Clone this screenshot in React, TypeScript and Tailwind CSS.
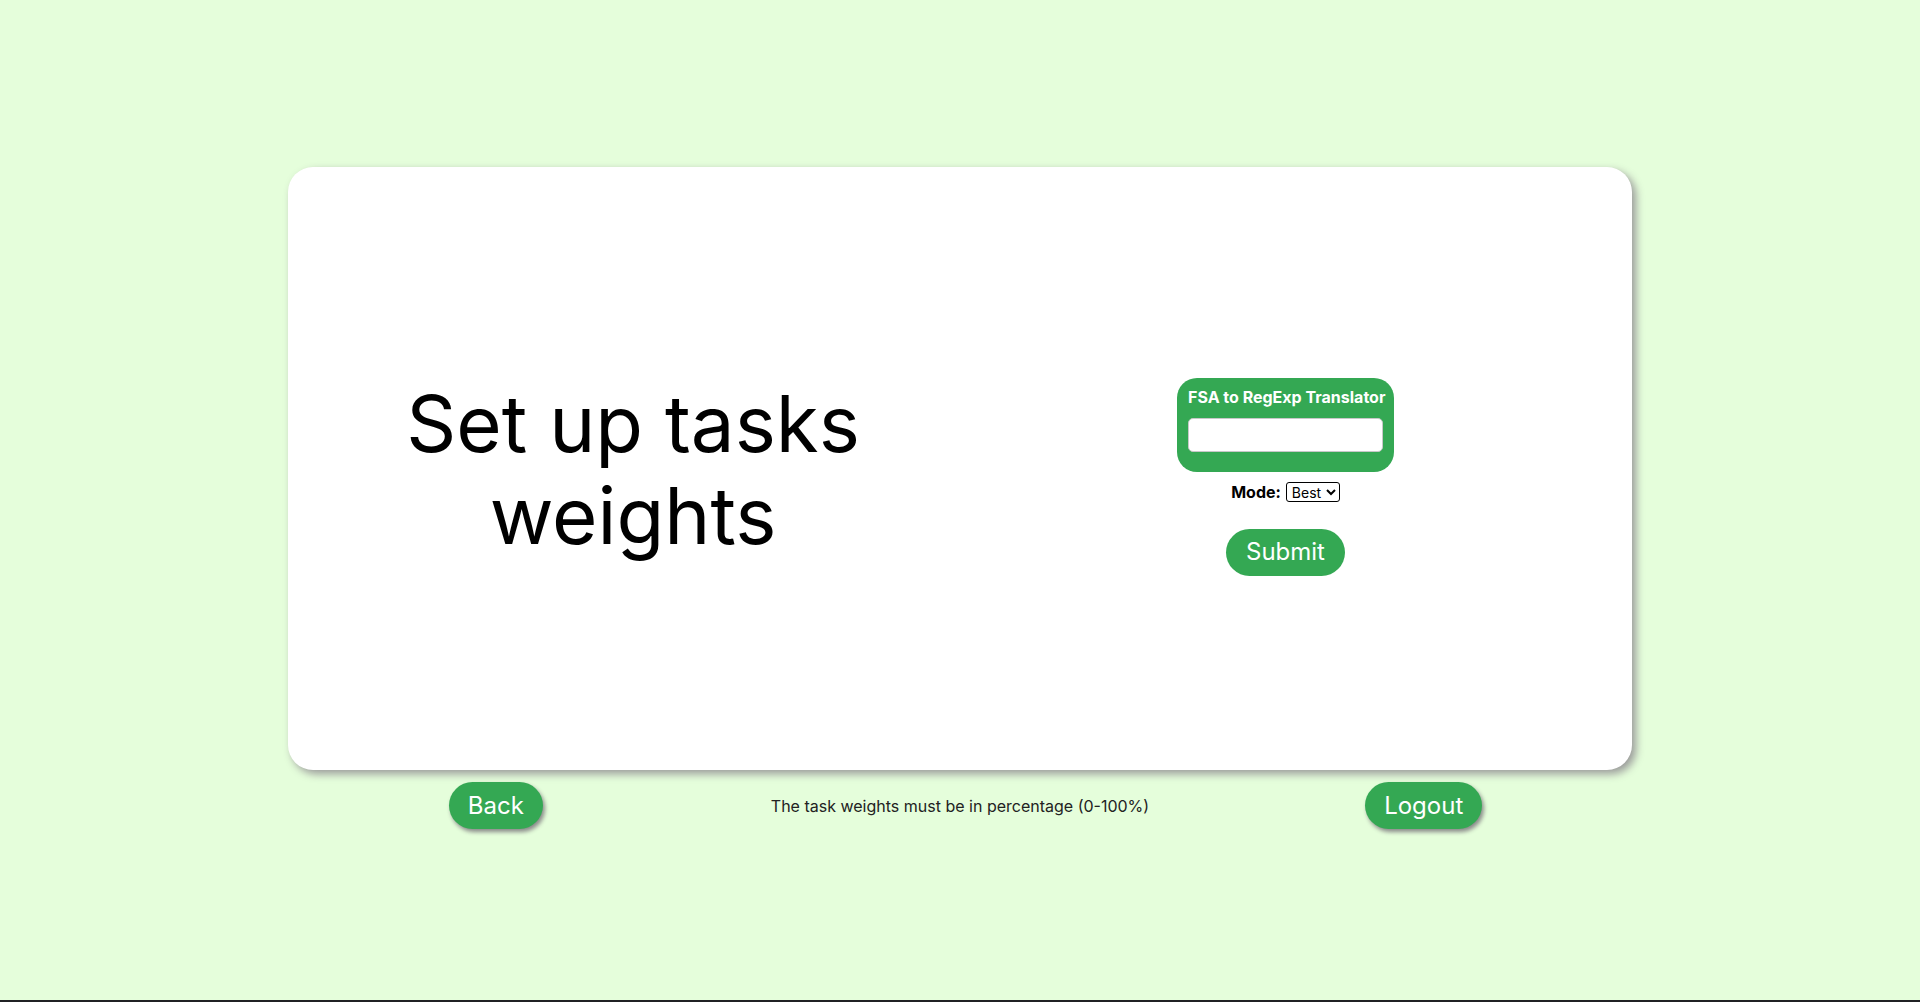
import { useState } from "react";

export default function App() {
  const [mode, setMode] = useState("Best");

  return (
    <div className="h-[1002px] w-full bg-[#e5fedb] flex flex-col font-['Inter',sans-serif] text-black overflow-hidden">
      {/* Main card */}
      <div className="mx-auto mt-[167px] w-[1344px] h-[603px] rounded-[25px] bg-white shadow-[4px_4px_8px_#9a9a9a] grid grid-cols-2 items-center pt-[16px]">
        <div className="pl-[18px] pb-[14px] flex justify-center">
          <h1 className="text-[78px] leading-[92px] font-normal text-center">
            Set up tasks
            <br />
            weights
          </h1>
        </div>

        <div className="pr-[21px] flex flex-col items-center">
          <div className="w-[217px] rounded-[20px] bg-[#34a853] pt-[10px] px-[11px] pb-[20px]">
            <p className="text-[16px] leading-[19px] font-bold text-white text-center whitespace-nowrap">
              FSA to RegExp Translator
            </p>
            <input
              type="text"
              className="mt-[11px] block h-[34px] w-full rounded-[5px] border border-[#c8c8c8] bg-white outline-none px-2"
            />
          </div>

          <div className="mt-[8px] flex items-center justify-center gap-[5px]">
            <span className="text-[16px] font-bold">Mode:</span>
            <select
              value={mode}
              onChange={(e) => setMode(e.target.value)}
              className="h-[20px] text-[14px] leading-none border-[1.5px] border-black rounded-[3px] bg-white px-[1px]"
            >
              <option>Best</option>
              <option>Fast</option>
            </select>
          </div>

          <button className="mt-[25px] h-[47px] px-[20px] rounded-full bg-[#34a853] text-white text-[24px] leading-none">
            Submit
          </button>
        </div>
      </div>

      {/* Footer row */}
      <div className="mt-[12px] grid grid-cols-[1fr_auto_1fr] items-center">
        <div className="flex justify-end pr-[228px]">
          <button className="h-[47px] px-[19px] rounded-full bg-[#34a853] text-white text-[24px] leading-none shadow-[2px_3px_4px_#8a8a8a]">
            Back
          </button>
        </div>
        <p className="text-[16px] text-[#222]">The task weights must be in percentage (0-100%)</p>
        <div className="flex justify-start pl-[216px]">
          <button className="h-[47px] px-[19px] rounded-full bg-[#34a853] text-white text-[24px] leading-none shadow-[2px_3px_4px_#8a8a8a]">
            Logout
          </button>
        </div>
      </div>

      <div className="mt-auto h-[2px] w-full bg-[#202124]" />
    </div>
  );
}
